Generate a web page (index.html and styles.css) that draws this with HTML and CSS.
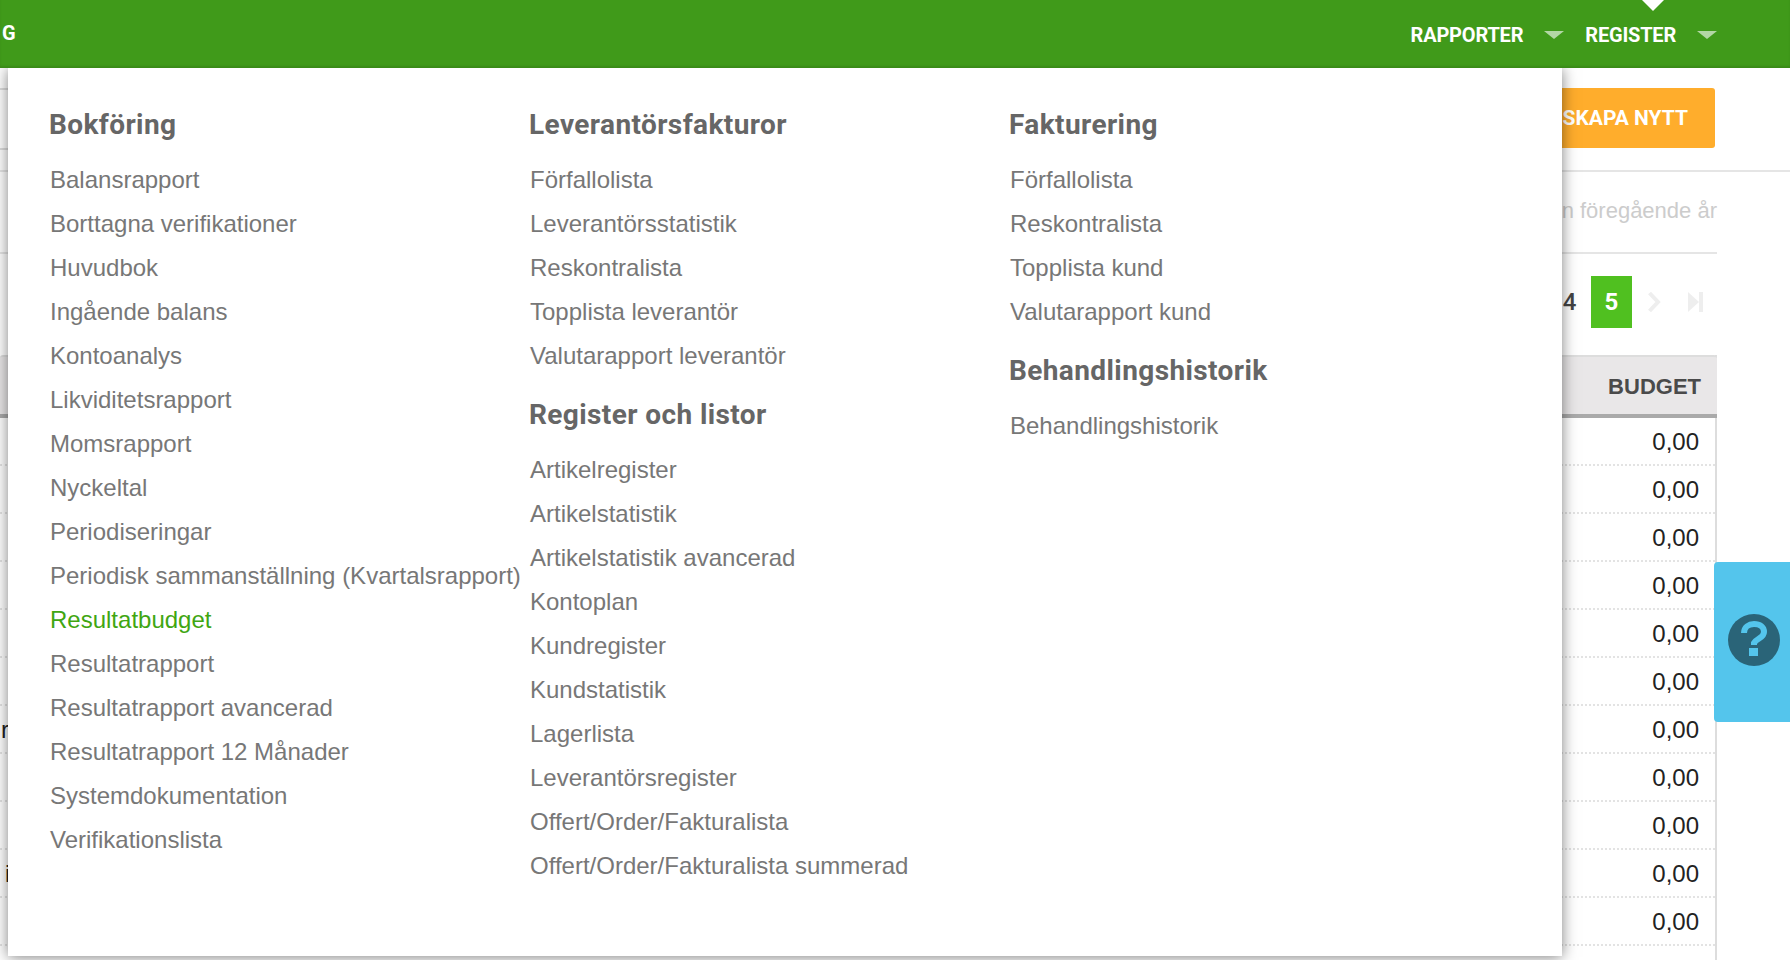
FILE: index.html

```html
<!DOCTYPE html>
<html lang="sv">
<head>
  <meta charset="UTF-8">
  <title>Rapporter - Resultatbudget</title>
  <link rel="stylesheet" href="styles.css">
</head>
<body>
  <header class="topbar">
    <span class="topbar-cut">G</span>
    <nav class="topnav">
      <a class="topnav-item">RAPPORTER<i class="caret"></i></a>
      <a class="topnav-item topnav-current">REGISTER<i class="caret"></i></a>
    </nav>
  </header>

  <div class="page">
    <div class="toolbar">
      <div class="titlebox"></div>
      <button class="btn-create">SKAPA NYTT</button>
    </div>

    <div class="filter">Jämförelse från föregående år</div>

    <div class="pager">
      <a class="pager-item">4</a>
      <a class="pager-item pager-current">5</a>
      <a class="pager-item">
        <svg width="14" height="22" viewBox="0 0 14 22"><path d="M2.5 2l8.5 9-8.5 9" fill="none" stroke="#eee" stroke-width="4"/></svg>
      </a>
      <a class="pager-item">
        <svg width="15" height="22" viewBox="0 0 15 22"><path d="M0 1l11 10L0 21z" fill="#eee"/><rect x="11" y="1" width="4" height="20" fill="#eee"/></svg>
      </a>
    </div>

    <div class="table">
      <div class="table-head">BUDGET</div>
      <div class="row"><span></span><span>0,00</span></div>
      <div class="row"><span></span><span>0,00</span></div>
      <div class="row"><span></span><span>0,00</span></div>
      <div class="row"><span></span><span>0,00</span></div>
      <div class="row"><span></span><span>0,00</span></div>
      <div class="row"><span></span><span>0,00</span></div>
      <div class="row"><span class="cut-r">r</span><span>0,00</span></div>
      <div class="row"><span></span><span>0,00</span></div>
      <div class="row"><span></span><span>0,00</span></div>
      <div class="row"><span class="cut-i">i</span><span>0,00</span></div>
      <div class="row"><span></span><span>0,00</span></div>
      <div class="row"></div>
    </div>
  </div>

  <div class="megamenu">
    <div class="menu-col">
      <h3>Bokföring</h3>
      <ul>
        <li><a>Balansrapport</a></li>
        <li><a>Borttagna verifikationer</a></li>
        <li><a>Huvudbok</a></li>
        <li><a>Ingående balans</a></li>
        <li><a>Kontoanalys</a></li>
        <li><a>Likviditetsrapport</a></li>
        <li><a>Momsrapport</a></li>
        <li><a>Nyckeltal</a></li>
        <li><a>Periodiseringar</a></li>
        <li><a>Periodisk sammanställning (Kvartalsrapport)</a></li>
        <li><a class="active">Resultatbudget</a></li>
        <li><a>Resultatrapport</a></li>
        <li><a>Resultatrapport avancerad</a></li>
        <li><a>Resultatrapport 12 Månader</a></li>
        <li><a>Systemdokumentation</a></li>
        <li><a>Verifikationslista</a></li>
      </ul>
    </div>
    <div class="menu-col">
      <h3>Leverantörsfakturor</h3>
      <ul>
        <li><a>Förfallolista</a></li>
        <li><a>Leverantörsstatistik</a></li>
        <li><a>Reskontralista</a></li>
        <li><a>Topplista leverantör</a></li>
        <li><a>Valutarapport leverantör</a></li>
      </ul>
      <h3>Register och listor</h3>
      <ul>
        <li><a>Artikelregister</a></li>
        <li><a>Artikelstatistik</a></li>
        <li><a>Artikelstatistik avancerad</a></li>
        <li><a>Kontoplan</a></li>
        <li><a>Kundregister</a></li>
        <li><a>Kundstatistik</a></li>
        <li><a>Lagerlista</a></li>
        <li><a>Leverantörsregister</a></li>
        <li><a>Offert/Order/Fakturalista</a></li>
        <li><a>Offert/Order/Fakturalista summerad</a></li>
      </ul>
    </div>
    <div class="menu-col">
      <h3>Fakturering</h3>
      <ul>
        <li><a>Förfallolista</a></li>
        <li><a>Reskontralista</a></li>
        <li><a>Topplista kund</a></li>
        <li><a>Valutarapport kund</a></li>
      </ul>
      <h3>Behandlingshistorik</h3>
      <ul>
        <li><a>Behandlingshistorik</a></li>
      </ul>
    </div>
  </div>

  <a class="help-tab">
    <svg width="52" height="52" viewBox="0 0 52 52">
      <circle cx="26" cy="26" r="26" fill="#2a6478"/>
      <path d="M16 19C16 13 21 10 26 10C32 10 36 13 36 18C36 24 29 24 26 29V31" fill="none" stroke="#54c5ec" stroke-width="6"/>
      <rect x="21" y="34" width="9" height="8" fill="#54c5ec"/>
    </svg>
  </a>
</body>
</html>
```

FILE: styles.css

```css
html, body {
  margin: 0;
  height: 960px;
  overflow: hidden;
}
body {
  font-family: "Liberation Sans", Arial, sans-serif;
  font-size: 24px;
  color: #222;
  background-color: #fff;
}

/* top bar */
.topbar {
  position: relative;
  z-index: 3;
  display: flex;
  justify-content: space-between;
  align-items: center;
  height: 68px;
  padding: 0 73px 0 2px;
  background-color: #409a1a;
  box-shadow: inset 0 -2px 2px rgba(0, 0, 0, 0.1);
  color: #fff;
  font-family: Roboto, sans-serif;
  font-size: 20px;
  font-weight: 700;
}
.topbar-cut {
  margin-top: -2px;
}
.topnav {
  display: flex;
  gap: 21px;
  padding-top: 2px;
}
.topnav-item {
  position: relative;
  display: flex;
  align-items: center;
  gap: 21px;
  letter-spacing: -0.2px;
}
.caret {
  width: 0;
  height: 0;
  border-left: 10px solid transparent;
  border-right: 10px solid transparent;
  border-top: 8px solid #b3d7a5;
}
.topnav-current::before {
  content: "";
  position: absolute;
  top: -24px;
  left: 56px;
  border-left: 12px solid transparent;
  border-right: 12px solid transparent;
  border-top: 12px solid #fff;
}

/* page behind the menu */
.toolbar {
  display: flex;
  justify-content: space-between;
  height: 82px;
  padding: 20px 75px 0 0;
  border-bottom: 2px solid #e5e5e5;
}
.titlebox {
  width: 300px;
  height: 58px;
  border-top: 2px solid #ddd;
  border-bottom: 2px solid #ddd;
}
.btn-create {
  height: 60px;
  padding: 0 27px;
  border: none;
  border-radius: 3px;
  background-color: #ffad2c;
  color: #fff;
  font-family: Roboto, sans-serif;
  font-size: 21px;
  font-weight: 700;
}
.filter {
  height: 80px;
  margin-right: 73px;
  border-bottom: 2px solid #e5e5e5;
  color: #ccc;
  font-size: 22px;
  line-height: 78px;
  text-align: right;
}
.pager {
  display: flex;
  justify-content: flex-end;
  gap: 1px;
  margin: 22px 74px 0 0;
}
.pager-item {
  display: flex;
  justify-content: center;
  align-items: center;
  width: 41px;
  height: 52px;
  color: #444;
  font-family: Roboto, sans-serif;
  font-weight: 500;
}
.pager-current {
  background-color: #50c020;
  color: #fff;
  font-weight: 700;
}
.table {
  margin: 27px 73px 0 0;
  border-right: 2px solid #ddd;
}
.table-head {
  box-sizing: border-box;
  height: 63px;
  margin-right: -2px;
  padding: 4px 16px 0 0;
  border-top: 2px solid #ddd;
  border-bottom: 4px solid #aaa;
  border-radius: 3px 3px 0 0;
  background-color: #e9e7e8;
  color: #4a4a4a;
  font-size: 22px;
  font-weight: 700;
  line-height: 52px;
  text-align: right;
}
.row {
  box-sizing: border-box;
  display: flex;
  justify-content: space-between;
  height: 48px;
  padding-right: 16px;
  border-bottom: 2px dotted #e3e3e3;
  line-height: 48px;
}
.cut-r {
  margin-left: 1px;
}
.cut-i {
  margin-left: 5px;
}

/* dropdown */
.megamenu {
  position: absolute;
  top: 68px;
  left: 8px;
  z-index: 2;
  box-sizing: border-box;
  display: grid;
  grid-template-columns: 480px 480px 1fr;
  width: 1554px;
  height: 888px;
  padding: 39px 0 0 42px;
  background-color: #fff;
  box-shadow: 0 1px 14px rgba(0, 0, 0, 0.5);
}
.menu-col {
  white-space: nowrap;
}
.menu-col h3 {
  margin: 19px 0 15px -1px;
  color: #666;
  font-family: Roboto, sans-serif;
  font-size: 28px;
  font-weight: 700;
  letter-spacing: 0.4px;
  line-height: 36px;
}
.menu-col h3:first-child {
  margin-top: 0;
}
.menu-col ul {
  margin: 0;
  padding: 0;
  list-style: none;
}
.menu-col li {
  height: 44px;
  color: #777;
  line-height: 44px;
}
.menu-col a.active {
  color: #3fa612;
}

/* help tab */
.help-tab {
  position: absolute;
  top: 562px;
  right: 0;
  z-index: 1;
  box-sizing: border-box;
  display: flex;
  justify-content: center;
  align-items: center;
  width: 76px;
  height: 160px;
  padding: 0 0 4px 4px;
  border-radius: 4px 0 0 4px;
  background-color: #54c5ec;
}
```
